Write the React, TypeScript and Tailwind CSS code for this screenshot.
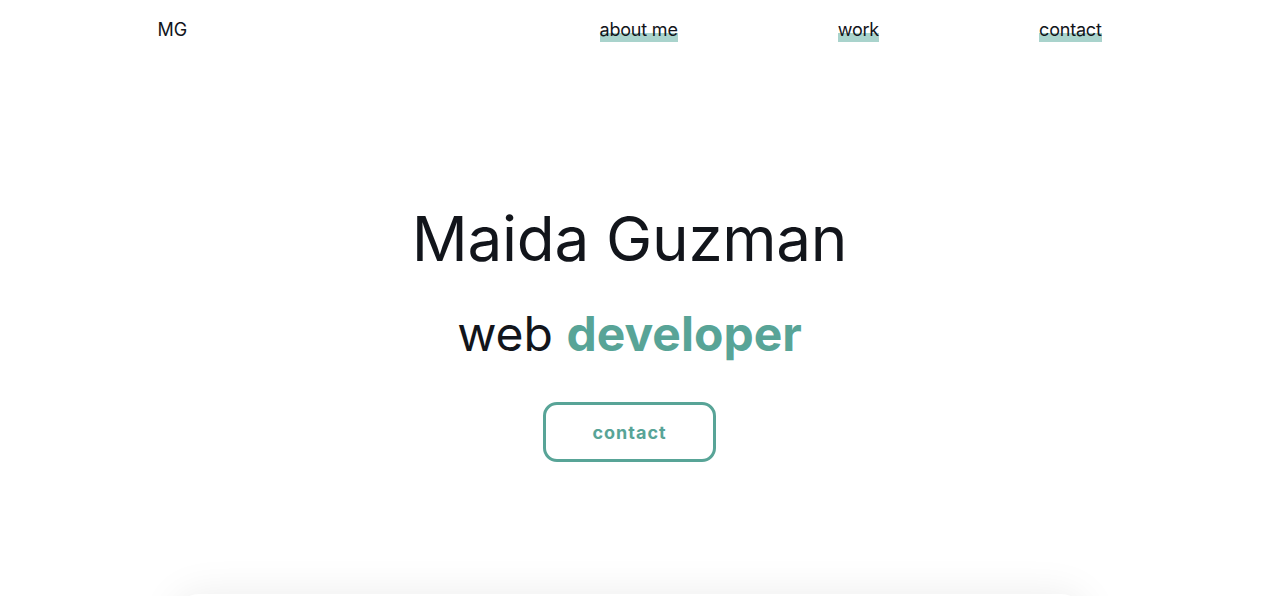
const links = ["about me", "work", "contact"]

const App = () => {
  return (
    <div className="min-h-screen bg-white pr-[3px] text-[#12151b] font-['Inter',sans-serif]">
      <nav className="mx-auto flex h-[58px] w-3/4 items-center justify-between">
        <a className="text-[18px]">MG</a>
        <ul className="flex gap-[160px] text-[18px] tracking-[-0.2px]">
          {links.map((l) => (
            <li key={l}>
              <a className="bg-[linear-gradient(transparent_62%,#a9d3cc_62%)] pb-[2px]">{l}</a>
            </li>
          ))}
        </ul>
      </nav>

      <header className="flex flex-col items-center pt-[150px]">
        <h1 className="text-[62px] leading-none tracking-[-0.3px]">Maida Guzman</h1>
        <h2 className="mt-[40px] text-[48px] leading-none">
          web <span className="font-bold text-[#58a497]">developer</span>
        </h2>
        <button className="mt-[44px] h-[60px] w-[173px] rounded-[14px] border-[3px] border-[#58a497] text-[18px] font-bold tracking-[1px] text-[#58a497]">
          contact
        </button>
      </header>

      <section className="mx-auto mt-[132px] h-[300px] w-[910px] rounded-[24px] bg-white shadow-[0_0_40px_rgba(0,0,0,0.08)]"></section>
    </div>
  )
}

export default App
